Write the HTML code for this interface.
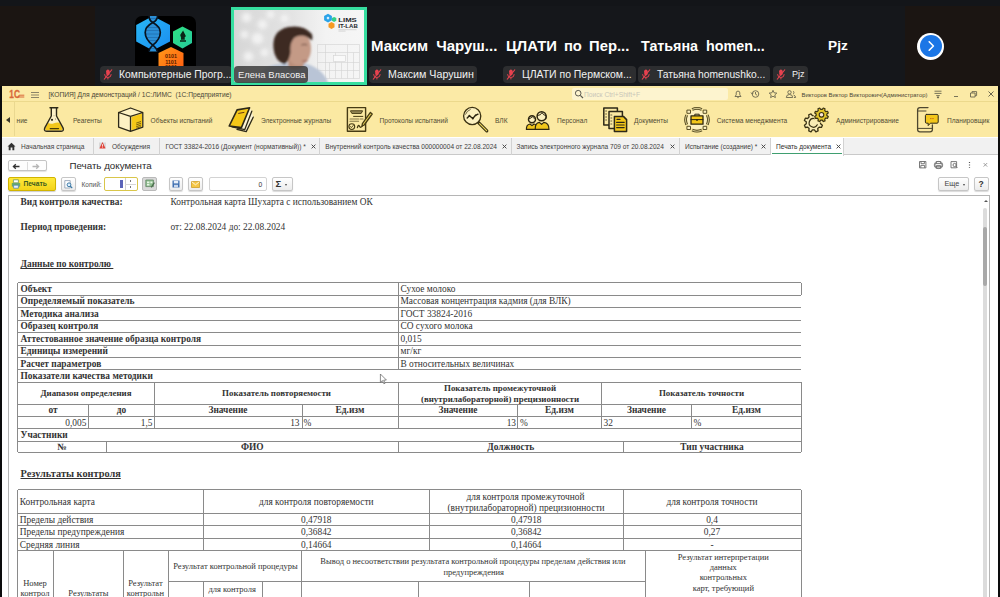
<!DOCTYPE html>
<html lang="ru">
<head>
<meta charset="utf-8">
<title>Печать документа</title>
<style>
html,body{margin:0;padding:0;}
body{width:1000px;height:597px;overflow:hidden;background:#0c0c0d;position:relative;font-family:"Liberation Sans",sans-serif;}
.a{position:absolute;white-space:nowrap;}
#top{left:0;top:0;width:1000px;height:86px;background:#15171b;}
.big{color:#fff;font-weight:bold;font-size:15px;line-height:18px;top:37px;word-spacing:4px;}
.pill{top:66px;height:17px;background:#2d2e30;border-radius:4px;color:#f2f2f2;font-size:10.7px;line-height:17px;padding-left:19px;box-sizing:border-box;overflow:hidden;}
.pill svg{position:absolute;left:2px;top:2px;}
#win{left:2px;top:86px;width:996px;height:511px;background:#fff;}
#title{left:0;top:0;width:996px;height:16px;background:#fbeaa6;border-bottom:1px solid #ecd98c;box-sizing:border-box;}
#sect{left:0;top:15px;width:996px;height:36px;background:#fbe9a2;}
#tabs{left:0;top:51.5px;width:996px;height:17.5px;background:#f1f1f1;border-bottom:1px solid #c9c9c9;box-sizing:border-box;}
.ui{font-size:6.7px;color:#4a4a4a;line-height:9px;}
.sec{font-size:6.6px;color:#514c33;line-height:9px;top:15px;}
.tab{top:0;height:17px;line-height:17px;font-size:6.6px;color:#3b3b3b;border-right:1px solid #cfcfcf;box-sizing:border-box;padding-left:6px;}
#doc{left:6px;top:109px;width:982px;height:402px;border:1px solid #b5b5b5;border-bottom:none;box-sizing:border-box;background:#fff;overflow:hidden;}
.s{text-decoration-skip-ink:none;font-family:"Liberation Serif",serif;font-size:9.4px;line-height:12px;color:#222;}
.b{font-weight:bold;}
</style>
</head>
<body>
<div id="top" class="a">
 <div class="a" style="left:0;top:0;width:1000px;height:6px;background:#131519"></div>
 <div class="a" style="left:905px;top:6px;width:95px;height:80px;background:#1b1512"></div>
 <div class="a" style="left:0;top:6px;width:95px;height:80px;background:#1b1512"></div>
 <!-- logo tile -->
 <div class="a" style="left:135px;top:16px;width:61px;height:62px;background:#000;border-radius:7px;overflow:hidden">
  <svg class="a" style="left:0;top:0" width="61" height="62" viewBox="0 0 61 62">
   <defs>
    <linearGradient id="gb" x1="0" y1="0" x2="1" y2="1"><stop offset="0" stop-color="#29b8f5"/><stop offset="1" stop-color="#1a8df0"/></linearGradient>
    <linearGradient id="gg" x1="0" y1="0" x2="1" y2="1"><stop offset="0" stop-color="#2fe07f"/><stop offset="1" stop-color="#25c9a0"/></linearGradient>
    <linearGradient id="go" x1="0" y1="0" x2="1" y2="1"><stop offset="0" stop-color="#ff9a1a"/><stop offset="1" stop-color="#ff5a10"/></linearGradient>
   </defs>
   <polygon points="17.8,0 35,8.9 35,25.5 17.8,34.5 1.2,25.5 1.2,8.9" fill="url(#gb)"/>
   <path d="M14,0 C14,4 16,5.5 17.8,6.6 C13.5,9 10.2,12 10.2,16.4 C10.2,22 14.5,26.5 17.8,29.2 C16,31 14,32 14,35.5 L22.3,35.5 C22,32 19.5,31 17.8,29.2 C21,26.5 25.3,22 25.3,16.4 C25.3,12 22,9 17.8,6.6 C20,5.5 22.5,4 22.5,0 Z" fill="#2b8fd6"/>
   <path d="M12,11.5 h11.6 M10.8,14.5 h14 M10.8,18 h14 M11.8,21.5 h12 M13.6,24.5 h8.4 M15,2.5 h6.5 M15.5,32.5 h5" stroke="#1f6fb0" stroke-width="0.8"/>
   <path d="M14,0 C14,4 16,5.5 17.8,6.6 C22,9 25.3,12 25.3,16.4 C25.3,22 21,26.5 17.8,29.2 C16,31 14,32 14,35.5 M22.5,0 C22.5,4 20,5.5 17.8,6.6 C13.5,9 10.2,12 10.2,16.4 C10.2,22 14.5,26.5 17.8,29.2 C19.5,31 22,32 22.3,35.5" stroke="#08131f" stroke-width="1.7" fill="none"/>
   <polygon points="47.5,10.5 57,15.5 57,27 47.5,32.5 38,27 38,15.5" fill="url(#gg)"/>
   <path d="M45,25 h6 M48,16 l2,4 l-3,2 l-1,-3 z M46,23 l3,0 l0,-2" stroke="#0b2418" stroke-width="1.5" fill="#0b2418"/>
   <polygon points="36,31 48.5,37 48.5,51 36,57 23.5,51 23.5,37" fill="url(#go)"/>
   <text x="36" y="42" font-family="Liberation Sans, sans-serif" font-weight="bold" font-size="5.4" text-anchor="middle" fill="#5a1d00">0101</text>
   <text x="36" y="47.6" font-family="Liberation Sans, sans-serif" font-weight="bold" font-size="5.4" text-anchor="middle" fill="#5a1d00">1101</text>
   <text x="36" y="53" font-family="Liberation Sans, sans-serif" font-weight="bold" font-size="5.4" text-anchor="middle" fill="#5a1d00">0101</text>
  </svg>
 </div>
 <div class="a pill" style="left:100px;width:132px;font-size:10.35px"><svg width="12" height="13" viewBox="0 0 12 13"><rect x="4.2" y="1.5" width="3.4" height="6" rx="1.7" fill="#e8424f"/><path d="M2.6,6.2 a3.3,3.3 0 0 0 6.6,0 M5.9,9.6 v1.8" stroke="#e8424f" stroke-width="1" fill="none"/><path d="M2,11.5 L10,1.5" stroke="#e8424f" stroke-width="1.2"/></svg>Компьютерные Прогр...</div>
 <!-- video tile -->
 <div class="a" id="vid" style="left:231px;top:7px;width:136px;height:78px;background:#e9e9e9;border:3px solid #36dea0;box-sizing:border-box;overflow:hidden">
  <svg class="a" style="left:-0.5px;top:-0.5px" width="131" height="73" viewBox="233.5 9.5 131 73">
   <defs>
    <filter id="bl" x="-20%" y="-20%" width="140%" height="140%"><feGaussianBlur stdDeviation="1.1"/></filter>
    <filter id="bl2" x="-20%" y="-20%" width="140%" height="140%"><feGaussianBlur stdDeviation="2.2"/></filter>
    <linearGradient id="bgv" x1="0" y1="0" x2="1" y2="0"><stop offset="0" stop-color="#d6d6d6"/><stop offset="0.45" stop-color="#e4e4e4"/><stop offset="0.7" stop-color="#f3f3f3"/><stop offset="1" stop-color="#f6f6f6"/></linearGradient>
   </defs>
   <rect x="233" y="9" width="132" height="74" fill="url(#bgv)"/>
   <g filter="url(#bl2)" fill="#f4f4f4" opacity="0.9">
    <circle cx="246" cy="17" r="5"/><circle cx="262" cy="24" r="5"/><circle cx="257" cy="38" r="6"/><circle cx="244" cy="34" r="4"/><circle cx="270" cy="14" r="4"/><circle cx="248" cy="56" r="5"/><circle cx="264" cy="52" r="4"/><circle cx="284" cy="18" r="4"/>
   </g>
   <g stroke="#cfcfcf" stroke-width="0.6" fill="none" opacity="0.9">
    <path d="M317,44 H359 V78 H317 Z M317,52 H359 M325,44 V78 M335,52 V78 M347,44 V78 M317,62 H359 M317,70 H359 M353,52 V78 M329,62 V78 M341,62 V78"/>
    <rect x="333" y="55" width="12" height="6" fill="#fafafa"/>
   </g>
   <g filter="url(#bl)">
    <path d="M256,83 Q258,67 276,64 L300,62 Q322,66 328,83 Z" fill="#b9c4d6"/>
    <path d="M287,50 L288,68 Q296,72 303,66 L303,56 Z" fill="#b98d78"/>
    <ellipse cx="298" cy="48" rx="12.5" ry="17" fill="#c49a86"/>
    <path d="M305,44 q5,6 3,10 q-2,2 -3,5 q-1,5 -6,5" fill="#c49a86"/>
    <path d="M273,48 Q271,30 288,26.5 Q303,24 311,33 Q313,37 311,40 Q303,32 294,37 Q289,42 290,52 Q289,60 284,64 Q274,60 273,48 Z" fill="#3d2a22"/>
    <path d="M302,60.5 q3,0.6 5,-0.4" stroke="#8a4a44" stroke-width="1.1" fill="none"/>
    <path d="M301,44.5 q3,-1.4 5.6,0" stroke="#5a3b30" stroke-width="1" fill="none"/>
   </g>
   <!-- LIMS IT-LAB logo -->
   <polygon points="327.5,13.2 331.4,15.4 331.4,19.8 327.5,22 323.6,19.8 323.6,15.4" fill="#2aa3e8"/>
   <circle cx="327.5" cy="17.6" r="1.3" fill="#cfeeff"/>
   <polygon points="333.6,16.4 335.8,17.6 335.8,20.2 333.6,21.4 331.4,20.2 331.4,17.6" fill="#33cf8a"/>
   <polygon points="331,21.6 334,23.3 334,26.7 331,28.4 328,26.7 328,23.3" fill="#f59a23"/>
   <text x="337.8" y="21.6" font-family="Liberation Sans, sans-serif" font-weight="bold" font-size="5.6" fill="#22252b" textLength="18.5" lengthAdjust="spacingAndGlyphs">LIMS</text>
   <text x="337.8" y="27.2" font-family="Liberation Sans, sans-serif" font-weight="bold" font-size="5.6" fill="#22252b" textLength="19.5" lengthAdjust="spacingAndGlyphs">IT-LAB</text>
   <path d="M338,29.2 H356 M338,30.6 H345" stroke="#b9b9b9" stroke-width="0.5"/>
  </svg>
 </div>
 <div class="a pill" style="left:234px;width:74px;padding-left:4px;background:rgba(60,60,60,.85);font-size:9.46px">Елена Власова</div>
 <div class="a big" style="left:371px;font-size:15px;word-spacing:4px">Максим Чаруш...</div>
 <div class="a pill" style="left:369px;width:108px;font-size:10.68px"><svg width="12" height="13" viewBox="0 0 12 13"><rect x="4.2" y="1.5" width="3.4" height="6" rx="1.7" fill="#e8424f"/><path d="M2.6,6.2 a3.3,3.3 0 0 0 6.6,0 M5.9,9.6 v1.8" stroke="#e8424f" stroke-width="1" fill="none"/><path d="M2,11.5 L10,1.5" stroke="#e8424f" stroke-width="1.2"/></svg>Максим Чарушин</div>
 <div class="a big" style="left:506px;font-size:14.8px;word-spacing:3px">ЦЛАТИ по Пер...</div>
 <div class="a pill" style="left:503px;width:133px;font-size:10.44px"><svg width="12" height="13" viewBox="0 0 12 13"><rect x="4.2" y="1.5" width="3.4" height="6" rx="1.7" fill="#e8424f"/><path d="M2.6,6.2 a3.3,3.3 0 0 0 6.6,0 M5.9,9.6 v1.8" stroke="#e8424f" stroke-width="1" fill="none"/><path d="M2,11.5 L10,1.5" stroke="#e8424f" stroke-width="1.2"/></svg>ЦЛАТИ по Пермском...</div>
 <div class="a big" style="left:641px;font-size:14.3px;word-spacing:4px">Татьяна homen...</div>
 <div class="a pill" style="left:638px;width:132px;font-size:10.25px"><svg width="12" height="13" viewBox="0 0 12 13"><rect x="4.2" y="1.5" width="3.4" height="6" rx="1.7" fill="#e8424f"/><path d="M2.6,6.2 a3.3,3.3 0 0 0 6.6,0 M5.9,9.6 v1.8" stroke="#e8424f" stroke-width="1" fill="none"/><path d="M2,11.5 L10,1.5" stroke="#e8424f" stroke-width="1.2"/></svg>Татьяна homenushko...</div>
 <div class="a big" style="left:828px;font-size:13.7px;word-spacing:0px">Pjz</div>
 <div class="a pill" style="left:773px;width:35px;font-size:9.1px"><svg width="12" height="13" viewBox="0 0 12 13"><rect x="4.2" y="1.5" width="3.4" height="6" rx="1.7" fill="#e8424f"/><path d="M2.6,6.2 a3.3,3.3 0 0 0 6.6,0 M5.9,9.6 v1.8" stroke="#e8424f" stroke-width="1" fill="none"/><path d="M2,11.5 L10,1.5" stroke="#e8424f" stroke-width="1.2"/></svg>Pjz</div>
 <div class="a" style="left:917px;top:32.5px;width:27px;height:27px;border-radius:50%;background:#fff"></div>
 <div class="a" style="left:919.5px;top:35px;width:22px;height:22px;border-radius:50%;background:#1b76e6"></div>
 <svg class="a" style="left:924px;top:39px" width="14" height="14" viewBox="0 0 14 14"><path d="M5.2,2.8 L9.4,7 L5.2,11.2" stroke="#fff" stroke-width="1.6" fill="none" stroke-linecap="round" stroke-linejoin="round"/></svg>
</div>
<div id="win" class="a">
 <div class="a" style="left:0;top:15px;width:996px;height:36px;background:#fbe9a2"></div>
 <div id="title" class="a">
  <svg class="a" style="left:6.5px;top:3px" width="17" height="10" viewBox="8.5 89 17 10">
   <text x="8.8" y="97.6" font-family="Liberation Sans, sans-serif" font-weight="bold" font-size="10.4" fill="#d9693a" stroke="#d9693a" stroke-width="0.3" textLength="10.6" lengthAdjust="spacingAndGlyphs">1С</text>
   <path d="M17.5,97 H23.8 M18.6,95.2 H23.8" stroke="#d9693a" stroke-width="1" fill="none"/>
  </svg>
  <div class="a" style="left:29px;top:5.5px;width:8px;height:1px;background:#8b8468;box-shadow:0 2.5px 0 #8b8468,0 5px 0 #8b8468"></div>
  <div class="a ui" style="left:46.5px;top:4px;color:#4a4636">[КОПИЯ] Для демонстраций / 1С:ЛИМС&nbsp; (1С:Предприятие)</div>
  <div class="a" style="left:570px;top:2px;width:156px;height:12px;background:#fdf4cf;border-radius:2px"></div>
  <svg class="a" style="left:572px;top:3px" width="10" height="10" viewBox="0 0 10 10"><circle cx="4.2" cy="4.2" r="2.8" stroke="#5c5a50" stroke-width="1" fill="none"/><path d="M6.3,6.3 L9,9" stroke="#5c5a50" stroke-width="1.2"/></svg>
  <div class="a ui" style="left:582px;top:4px;color:#c9c6b8">Поиск Ctrl+Shift+F</div>
  <svg class="a" style="left:730px;top:2px" width="70" height="12" viewBox="0 0 70 12" fill="none" stroke="#6a664f" stroke-width="0.9">
   <path d="M3,8.5 h6 l-1.2,-1.6 v-2 a1.8,1.8 0 0 0 -3.6,0 v2 z M5.3,9.6 h1.4"/>
   <circle cx="23.5" cy="6" r="3.3"/><path d="M23.5,4 v2.2 l1.6,1 M19,4.5 l1.2,1.6 1.4,-1.2"/>
   <path d="M41,2.3 l1.1,2.5 2.7,0.3 -2,1.8 0.6,2.7 -2.4,-1.4 -2.4,1.4 0.6,-2.7 -2,-1.8 2.7,-0.3 z"/>
   <circle cx="57.5" cy="4.3" r="1.7"/><path d="M54.3,9.5 a3.2,3 0 0 1 6.4,0 z M61,3.2 a1.5,1.5 0 0 1 0,2.8 M62,9.5 h1.6 a2.6,2.6 0 0 0 -2,-2.4"/>
  </svg>
  <div class="a" style="left:799.5px;top:4.5px;font-size:5.9px;line-height:8px;color:#4a4636">Викторов Виктор Викторович(Администратор)</div>
  <svg class="a" style="left:930px;top:2px" width="66" height="12" viewBox="0 0 66 12" fill="none" stroke="#6a664f" stroke-width="0.9">
   <path d="M2.5,3.2 h7 M2.5,5.4 h7 M4.2,7.6 h3.6"/><path d="M5,9 h2 l-1,1.2 z" fill="#6a664f"/>
   <path d="M22,8.5 h4"/>
   <path d="M38.5,5 h4.6 v4 h-4.6 z M40,5 v-1.4 h4.6 v4 h-1.5"/>
   <path d="M56.5,3.5 l5,5 M61.5,3.5 l-5,5" stroke-width="1"/>
  </svg>
 </div>
 <div id="sect" class="a" style="left:0;top:0;height:51px;background:none">
<div class="a" style="left:4px;top:31px;width:0;height:0;border:3px solid transparent;border-right:4px solid #3a3627;border-left:none"></div>
<div class="a" style="left:12px;top:16px;width:1px;height:34px;background:#ead890"></div>
<div class="a sec" style="left:14.5px;top:29.5px">ние</div>
<svg class="a" style="left:40px;top:19px" width="24" height="28" viewBox="42 105 24 28" fill="none" stroke="#2d2918" stroke-width="1.3" stroke-linejoin="round" stroke-linecap="round">
 <path d="M51.3,108 V116 L44.9,127.6 Q43.4,131 46.6,131.2 H61.2 Q64.4,131 62.9,127.6 L56.5,116 V108 Z" fill="#fdf2c6" stroke="none"/>
 <path d="M48.2,123 Q51,124.4 54,123.2 T59.6,122.8 L62.2,127.6 Q63.4,130.4 60.8,130.6 H47 Q44.4,130.4 45.6,127.6 Z" fill="#f3c71b" stroke="none"/>
 <path d="M50,107.8 H57.8 M51.3,108 V116 L44.9,127.6 Q43.4,131 46.6,131.2 H61.2 Q64.4,131 62.9,127.6 L56.5,116 V108" stroke-width="1.4"/>
 <circle cx="52" cy="119.8" r="1.1" fill="#2d2918" stroke="none"/><circle cx="55.6" cy="119" r="0.45" fill="#2d2918" stroke="none"/><circle cx="54" cy="115.8" r="0.4" fill="#2d2918" stroke="none"/>
 <path d="M50.2,128.6 H58.6" stroke="#4a3d08" stroke-width="1.1"/></svg>
<div class="a sec" style="left:71px;top:29.5px">Реагенты</div>
<svg class="a" style="left:115px;top:20px" width="28" height="27" viewBox="117 106 28 27" fill="none" stroke="#2d2918" stroke-width="1.3" stroke-linejoin="round" stroke-linecap="round">
 <path d="M130.5,108 L142.8,112.5 L130.5,116.4 L118.6,112.5 Z M118.6,112.5 L130.5,116.4 V131.3 L118.6,127.1 Z" fill="#fdf2c4" stroke="none"/>
 <path d="M131.6,117 L142,113.6 V126.6 L131.6,130.2 Z" fill="#f5c818" stroke="none"/>
 <path d="M130.5,108 L142.8,112.5 V127.1 L130.5,131.3 L118.6,127.1 V112.5 Z M118.6,112.5 L130.5,116.4 L142.8,112.5 M130.5,116.4 V131.3"/>
 <path d="M136.6,123 l4,-1.4 M136.6,124.8 l4,-1.4 M136.6,126.6 l4,-1.4 M136.6,128.2 l4,-1.4" stroke="#5a4a10" stroke-width="0.8"/></svg>
<div class="a sec" style="left:148.5px;top:29.5px">Объекты испытаний</div>
<svg class="a" style="left:225px;top:19px" width="30" height="29" viewBox="227 105 30 29" fill="none" stroke="#2d2918" stroke-width="1.3" stroke-linejoin="round" stroke-linecap="round">
 <path d="M249.6,108 L251.8,111 L253.2,117 L246.2,131.6 L229.4,126.6 Z" fill="#fdf5d5" stroke="none"/>
 <path d="M251.8,111.2 L244.8,129.6 L232,126.9 M253.2,117.2 L246.2,131.6 L237,129.4" stroke-width="1.3"/>
 <path d="M237.1,109.9 L249.6,107.8 L241.4,127.6 L229.2,126 Z" fill="#f5c818" stroke-width="1.6"/>
 <path d="M238.6,113.4 L244,112.4" stroke="#6a3a10" stroke-width="1"/></svg>
<div class="a sec" style="left:259px;top:29.5px">Электронные журналы</div>
<svg class="a" style="left:343px;top:19px" width="30" height="29" viewBox="345 105 30 29" fill="none" stroke="#2d2918" stroke-width="1.3" stroke-linejoin="round" stroke-linecap="round">
 <path d="M347.4,107.6 H365.6 V131.2 H347.4 Z" stroke="#463b14" stroke-width="1.4"/>
 <path d="M350.8,110.8 H362.6 L361.2,113.4 H352.2 Z" fill="#9a8d5a" stroke="#463b14" stroke-width="1"/>
 <path d="M353.6,116.4 H362.8" stroke="#463b14" stroke-width="1"/>
 <path d="M350,119 H358.6 M360,119 H363 M350,121.2 H358.6" stroke="#85784a" stroke-width="1.1"/>
 <circle cx="351.8" cy="126.6" r="2.9" stroke="#463b14" stroke-width="1.1"/><path d="M350.4,126.5 l1,1.1 1.8,-2.1" stroke="#463b14" stroke-width="0.9"/>
 <path d="M357.4,127.6 q1,-3.4 2,-1.4 t2.6,0.2 l1.4,-1.4" stroke="#463b14" stroke-width="1.3"/>
 <path d="M370.4,112.4 L372.2,114 L364.2,125 L362,126 L362.4,123.6 Z" fill="#e9d25a" stroke="#463b14" stroke-width="1.3"/></svg>
<div class="a sec" style="left:377.5px;top:29.5px">Протоколы испытаний</div>
<svg class="a" style="left:459px;top:19px" width="30" height="29" viewBox="461 105 30 29" fill="none" stroke="#2d2918" stroke-width="1.3" stroke-linejoin="round" stroke-linecap="round">
 <path d="M478.6,122.6 L486.8,130.8" stroke="#3a3112" stroke-width="3.2"/>
 <path d="M479.6,123.6 L486.6,130.6" stroke="#ecd75a" stroke-width="1.2"/>
 <circle cx="472.2" cy="116" r="8.6" fill="#fcf1c0" stroke="#3a3112" stroke-width="1.3"/>
 <path d="M465.6,114.2 a7,7 0 0 1 4.6,-4.6" stroke="#3a3112" stroke-width="0.7"/>
 <path d="M467.2,117.9 L469.4,115.7 L472.8,118.5 L475.4,115.4 L478,114.2" stroke="#2a2410" stroke-width="1.4"/>
 <circle cx="469.4" cy="115.7" r="0.9" fill="#2a2410" stroke="none"/><circle cx="472.8" cy="118.5" r="0.9" fill="#2a2410" stroke="none"/><circle cx="475.6" cy="115.3" r="0.9" fill="#2a2410" stroke="none"/></svg>
<div class="a sec" style="left:493px;top:29.5px">ВЛК</div>
<svg class="a" style="left:521px;top:21px" width="28" height="26" viewBox="523 107 28 26" fill="none" stroke="#2d2918" stroke-width="1.3" stroke-linejoin="round" stroke-linecap="round">
 <path d="M526.4,129.4 Q526.2,124.6 530,124 L532,125.6 L534,124 Q535.4,124.2 536,125 L536,129.4 Z" fill="#f0c61c" stroke="#2d2610" stroke-width="1.2"/>
 <circle cx="532" cy="119.2" r="3.5" fill="#fcf1c0" stroke="#2d2610" stroke-width="1.5"/>
 <path d="M528.8,118.6 q2.6,0 3.4,-2 q1.2,1.6 3,1.8" stroke="#2d2610" stroke-width="1"/>
 <path d="M535.2,129.4 Q535,123 539.4,122.4 L541.6,124.4 L543.8,122.4 Q549,123 549,129.4 Z" fill="#f0c61c" stroke="#2d2610" stroke-width="1.2"/>
 <circle cx="541.6" cy="116.2" r="4.5" fill="#fcf1c0" stroke="#2d2610" stroke-width="1.5"/>
 <path d="M537.4,115.6 q3.6,-0.2 4.6,-3 q1.4,2.8 3.8,3" stroke="#2d2610" stroke-width="1"/>
 <path d="M546.4,116 q0.6,2 -0.6,3.4" stroke="#2d2610" stroke-width="0.9"/></svg>
<div class="a sec" style="left:555px;top:29.5px">Персонал</div>
<svg class="a" style="left:600px;top:20px" width="27" height="28" viewBox="602 106 27 28" fill="none" stroke="#2d2918" stroke-width="1.3" stroke-linejoin="round" stroke-linecap="round">
 <path d="M603.8,108 H617.4 V125 H603.8 Z" stroke-width="1.5"/>
 <path d="M605.6,111 h1 M605.6,114 h1 M605.6,117 h1 M605.6,120 h1" stroke-width="0.7"/>
 <path d="M609,111.6 H622.4 V128.6 H609 Z" fill="#fbe9a2" stroke-width="1.5"/>
 <path d="M610.8,115 h1 M610.8,118 h1 M610.8,121 h1 M610.8,124 h1" stroke-width="0.7"/>
 <path d="M614.4,116.4 H623.4 L626.6,119.6 V131.6 H614.4 Z" fill="#f3c71b" stroke-width="1.5"/>
 <path d="M617,119.4 h3 M616.6,122.4 h7.6 M616.6,125 h7.6 M616.6,127.6 h7.6" stroke-width="1.1"/></svg>
<div class="a sec" style="left:632px;top:29.5px">Документы</div>
<svg class="a" style="left:681px;top:19px" width="28" height="29" viewBox="683 105 28 29" fill="none" stroke="#2d2918" stroke-width="1.3" stroke-linejoin="round" stroke-linecap="round">
 <circle cx="697" cy="119.8" r="10" fill="#fcf0bf" stroke="none"/>
 <path d="M692.2,109.5 A11.4,11.4 0 0 1 701.8,109.5 M707.3,115.0 A11.4,11.4 0 0 1 707.3,124.6 M701.8,130.1 A11.4,11.4 0 0 1 692.2,130.1 M686.7,124.6 A11.4,11.4 0 0 1 686.7,115.0" stroke="#4a4018" stroke-width="2.8" stroke-linecap="butt"/>
 <path d="M692.2,109.5 A11.4,11.4 0 0 1 701.8,109.5 M707.3,115.0 A11.4,11.4 0 0 1 707.3,124.6 M701.8,130.1 A11.4,11.4 0 0 1 692.2,130.1 M686.7,124.6 A11.4,11.4 0 0 1 686.7,115.0" stroke="#cfc28a" stroke-width="1.1" stroke-linecap="butt"/>
 <rect x="703.5" y="110.1" width="3.2" height="3.2" fill="#fbefc0" stroke="#4a4018" stroke-width="0.9"/><rect x="703.5" y="126.3" width="3.2" height="3.2" fill="#fbefc0" stroke="#4a4018" stroke-width="0.9"/><rect x="687.3" y="126.3" width="3.2" height="3.2" fill="#fbefc0" stroke="#4a4018" stroke-width="0.9"/><rect x="687.3" y="110.1" width="3.2" height="3.2" fill="#fbefc0" stroke="#4a4018" stroke-width="0.9"/>
 <path d="M691,115.8 H703 V124.2 H691 Z" fill="#f3c71b" stroke="#2d2610" stroke-width="1.3"/>
 <path d="M694.8,115.6 V114.2 H699.2 V115.6 M691,119.6 H703" stroke="#2d2610" stroke-width="1"/>
 <circle cx="697" cy="120" r="0.9" fill="#2d2610" stroke="none"/></svg>
<div class="a sec" style="left:714.8px;top:29.5px">Система менеджмента</div>
<svg class="a" style="left:800px;top:19px" width="30" height="29" viewBox="802 105 30 29" fill="none" stroke="#2d2918" stroke-width="1.3" stroke-linejoin="round" stroke-linecap="round"><path d="M820.53,123.80 L822.40,125.16 L821.45,127.45 L819.17,127.11 L817.74,128.55 L818.09,130.83 L815.81,131.78 L814.43,129.93 L812.40,129.93 L811.04,131.80 L808.75,130.85 L809.09,128.57 L807.65,127.14 L805.37,127.49 L804.42,125.21 L806.27,123.83 L806.27,121.80 L804.40,120.44 L805.35,118.15 L807.63,118.49 L809.06,117.05 L808.71,114.77 L810.99,113.82 L812.37,115.67 L814.40,115.67 L815.76,113.80 L818.05,114.75 L817.71,117.03 L819.15,118.46 L821.43,118.11 L822.38,120.39 L820.53,121.77 Z" fill="#f8ecb4" stroke="#3a3214" stroke-width="1.3"/><path d="M817.3,124.8 A4.3,4.3 0 1 1 814.6,118.7" stroke="#3a3214" stroke-width="1.2" fill="none"/><circle cx="821.5" cy="114.8" r="8" fill="#fbe9a2" stroke="none"/><path d="M826.85,115.55 L828.27,116.58 L827.56,118.30 L825.83,118.03 L824.75,119.11 L825.03,120.84 L823.31,121.56 L822.28,120.14 L820.75,120.15 L819.72,121.57 L818.00,120.86 L818.27,119.13 L817.19,118.05 L815.46,118.33 L814.74,116.61 L816.16,115.58 L816.15,114.05 L814.73,113.02 L815.44,111.30 L817.17,111.57 L818.25,110.49 L817.97,108.76 L819.69,108.04 L820.72,109.46 L822.25,109.45 L823.28,108.03 L825.00,108.74 L824.73,110.47 L825.81,111.55 L827.54,111.27 L828.26,112.99 L826.84,114.02 Z" fill="#e3c52a" stroke="#3a3214" stroke-width="1.2"/><circle cx="821.5" cy="114.8" r="2.3" fill="#fbe6d6" stroke="#3a3214" stroke-width="1.1"/></svg>
<div class="a sec" style="left:834px;top:29.5px">Администрирование</div>
<svg class="a" style="left:913px;top:19px" width="26" height="29" viewBox="915 105 26 29" fill="none" stroke="#2d2918" stroke-width="1.3" stroke-linejoin="round" stroke-linecap="round">
 <path d="M928,107.6 H920 Q917.6,107.6 917.6,110 V129.4 Q917.6,131.8 920,131.8 H930 Q932.4,131.8 932.4,129.4 V125" stroke="#4d4730"/>
 <path d="M917.6,128.4 H932.4 M917.6,111 H926" stroke="#4d4730" stroke-width="1"/>
 <path d="M926.6,114.4 H937 Q938.2,114.4 938.2,115.6 V122 Q938.2,123.2 937,123.2 H930.4 L928.2,125.6 V123.2 H926.6 Q925.4,123.2 925.4,122 V115.6 Q925.4,114.4 926.6,114.4 Z" fill="#f3c71b" stroke-width="1"/>
 <path d="M930.4,118.6 h0.8 M932.6,118.6 h0.8" stroke="#c76a16" stroke-width="0.9"/></svg>
<div class="a sec" style="left:945px;top:29.5px">Планировщик</div>
 </div>
 <div id="tabs" class="a">
<div class="a" style="left:91px;top:0;width:1px;height:17px;background:#d2d2d2"></div>
<div class="a" style="left:156.5px;top:0;width:1px;height:17px;background:#d2d2d2"></div>
<div class="a" style="left:316.5px;top:0;width:1px;height:17px;background:#d2d2d2"></div>
<div class="a" style="left:508.5px;top:0;width:1px;height:17px;background:#d2d2d2"></div>
<div class="a" style="left:676.5px;top:0;width:1px;height:17px;background:#d2d2d2"></div>
<div class="a" style="left:768px;top:0;width:1px;height:17px;background:#d2d2d2"></div>
<svg class="a" style="left:5px;top:4px" width="9" height="9" viewBox="0 0 9 9"><path d="M0.5,4.6 L4.5,0.8 L8.5,4.6 H7.3 V8.2 H5.4 V5.6 H3.6 V8.2 H1.7 V4.6 Z" fill="#333"/></svg>
<div class="a" style="left:19px;top:4px;font-size:6.55px;line-height:9px;color:#3d3d3d">Начальная страница</div>
<svg class="a" style="left:96px;top:3.5px" width="9" height="9" viewBox="0 0 9 9"><path d="M1,1.5 h7 v5.5 h-7 z" fill="#d9d9d9"/><path d="M4.5,1 L7.6,7.6 H1.4 Z" fill="#e0443a"/><path d="M4.5,3.2 v2.4 M4.5,6.4 v0.5" stroke="#fff" stroke-width="0.8"/></svg>
<div class="a" style="left:110px;top:4px;font-size:6.55px;line-height:9px;color:#3d3d3d">Обсуждения</div>
<div class="a" style="left:163.5px;top:4px;font-size:6.55px;line-height:9px;color:#3d3d3d">ГОСТ 33824-2016 (Документ (нормативный)) *</div>
<svg class="a" style="left:308.5px;top:6px" width="5" height="5" viewBox="0 0 5 5"><path d="M0.6,0.6 L4.4,4.4 M4.4,0.6 L0.6,4.4" stroke="#444" stroke-width="0.95"/></svg>
<div class="a" style="left:323.3px;top:4px;font-size:6.55px;line-height:9px;color:#3d3d3d">Внутренний контроль качества 000000004 от 22.08.2024</div>
<svg class="a" style="left:500.0px;top:6px" width="5" height="5" viewBox="0 0 5 5"><path d="M0.6,0.6 L4.4,4.4 M4.4,0.6 L0.6,4.4" stroke="#444" stroke-width="0.95"/></svg>
<div class="a" style="left:514.5px;top:4px;font-size:6.55px;line-height:9px;color:#3d3d3d">Запись электронного журнала 709 от 20.08.2024</div>
<svg class="a" style="left:668.0px;top:6px" width="5" height="5" viewBox="0 0 5 5"><path d="M0.6,0.6 L4.4,4.4 M4.4,0.6 L0.6,4.4" stroke="#444" stroke-width="0.95"/></svg>
<div class="a" style="left:683px;top:4px;font-size:6.55px;line-height:9px;color:#3d3d3d">Испытание (создание) *</div>
<svg class="a" style="left:759.0px;top:6px" width="5" height="5" viewBox="0 0 5 5"><path d="M0.6,0.6 L4.4,4.4 M4.4,0.6 L0.6,4.4" stroke="#444" stroke-width="0.95"/></svg>
<div class="a" style="left:769px;top:0;width:73px;height:18px;background:#fff;border-right:1px solid #d2d2d2;box-sizing:border-box"></div>
<div class="a" style="left:770px;top:15.2px;width:70px;height:1.4px;background:#3f9f70"></div>
<div class="a" style="left:774px;top:4px;font-size:6.55px;line-height:9px;color:#2c2c2c">Печать документа</div>
<svg class="a" style="left:834.0px;top:6px" width="5" height="5" viewBox="0 0 5 5"><path d="M0.6,0.6 L4.4,4.4 M4.4,0.6 L0.6,4.4" stroke="#444" stroke-width="0.95"/></svg>
 </div>
<div class="a" style="left:5.5px;top:73.5px;width:39px;height:11.5px;border:1px solid #c4c4c4;border-radius:2px;box-sizing:border-box;background:#fdfdfd;box-shadow:0 1px 1px rgba(0,0,0,.12)"></div>
<div class="a" style="left:24.5px;top:75.5px;width:1px;height:8.5px;background:#dcdcdc"></div>
<svg class="a" style="left:10px;top:76.5px" width="32" height="7" viewBox="0 0 32 7"><path d="M7.5,3.5 H1.6 M3.8,1.2 L1.4,3.5 L3.8,5.8" stroke="#333" stroke-width="1.3" fill="none"/><path d="M20.5,3.5 H26.4 M24.2,1.2 L26.6,3.5 L24.2,5.8" stroke="#b5b5b5" stroke-width="1.3" fill="none"/></svg>
<div class="a" style="left:67.5px;top:73px;font-size:9.75px;line-height:13px;color:#2a2a2a">Печать документа</div>
<svg class="a" style="left:913px;top:73px" width="80" height="12" viewBox="915 159 80 12" fill="none" stroke="#6b6b6b" stroke-width="0.9">
 <path d="M919.5,161.5 h6.4 v6.4 h-6.4 z M921,161.5 v2.2 h3.4 v-2.2 M920.8,167.8 v-2.4 h3.8 v2.4"/>
 <path d="M935,163.6 h7 v3.2 h-7 z M936.4,163.4 v-1.8 h4.2 v1.8 M936.4,165.6 h4.2 v2.6 h-4.2 z"/><ellipse cx="938.5" cy="165" rx="4.2" ry="3.6" stroke-width="0.7"/>
 <path d="M951,161.6 h5.6 v6.2 h-5.6 z"/><circle cx="954.6" cy="165" r="1.6"/><path d="M955.8,166.2 l1.6,1.6"/>
 <path d="M969.5,162 v0.9 M969.5,164.6 v0.9 M969.5,167.2 v0.9" stroke="#555" stroke-width="1.2"/>
 <path d="M983.6,163 l3.6,3.6 M987.2,163 l-3.6,3.6" stroke="#888" stroke-width="0.8"/>
</svg>
<div class="a" style="left:5.5px;top:91px;width:48.5px;height:13.5px;border:1px solid #d1b400;border-radius:2px;box-sizing:border-box;background:linear-gradient(#ffe93a,#f3d31a);box-shadow:0 1px 1px rgba(0,0,0,.2)"></div>
<svg class="a" style="left:8.5px;top:93px" width="10" height="10" viewBox="0 0 10 10"><path d="M2.4,0.8 h5 v3 h-5 z" fill="#fff" stroke="#5b8a5e" stroke-width="0.7"/><path d="M0.8,4 h8.4 v3.6 h-8.4 z" fill="#6aa86c"/><path d="M2.6,6.2 h4.8 v3 h-4.8 z" fill="#e9f3ff" stroke="#4a7fb5" stroke-width="0.7"/></svg>
<div class="a" style="left:21.5px;top:93.30000000000001px;font-size:6.7px;line-height:9px;font-weight:bold;color:#3b5b1e">Печать</div>
<div class="a" style="left:59px;top:91px;width:14.5px;height:13.5px;border:1px solid #c6c6c6;border-radius:2px;box-sizing:border-box;background:linear-gradient(#ffffff,#ececec);box-shadow:0 1px 1px rgba(0,0,0,.15)"></div>
<svg class="a" style="left:62px;top:93.5px" width="9" height="9" viewBox="0 0 9 9"><path d="M0.8,0.6 h5.4 v7.4 h-5.4 z" fill="#fff" stroke="#7d8fa8" stroke-width="0.7"/><circle cx="5" cy="4.8" r="1.9" fill="#dff0ff" stroke="#2d6f9e" stroke-width="0.9"/><path d="M6.4,6.2 l1.8,1.9" stroke="#2d6f9e" stroke-width="1.1"/></svg>
<div class="a" style="left:79.5px;top:93.5px;font-size:6.55px;line-height:9px;color:#555">Копий:</div>
<div class="a" style="left:101.5px;top:90.5px;width:34px;height:14.5px;border:1px solid #d9c64a;border-radius:2px;box-sizing:border-box;background:#fff"></div>
<div class="a" style="left:118px;top:93.5px;width:2.6px;height:8.6px;background:#5a63b8"></div>
<div class="a" style="left:122.5px;top:92px;width:1px;height:11.5px;background:#cfcfcf"></div>
<div class="a" style="left:123px;top:97.5px;width:11px;height:1px;background:#d6d6d6"></div>
<div class="a" style="left:127.80000000000001px;top:94.4px;width:1.4px;height:1.4px;background:#777;box-shadow:0 6px 0 #777"></div>
<div class="a" style="left:140px;top:91px;width:14.5px;height:13.5px;border:1px solid #b9b9b9;border-radius:2px;box-sizing:border-box;background:#d9d9d9"></div>
<svg class="a" style="left:142.5px;top:93.30000000000001px" width="10" height="9" viewBox="0 0 10 9"><path d="M0.8,1 h7.6 v6.6 h-7.6 z" fill="#8fbf8f" stroke="#5a7d5c" stroke-width="0.7"/><path d="M2,2.4 h2.4 v1.8 h-2.4 z M5.4,2.4 h2 v1.8 h-2 z M2,5 h2.4 v1.6 h-2.4 z" fill="#e8f4e6"/><path d="M6.2,8.4 L9.4,3.6" stroke="#486b4a" stroke-width="1.1"/></svg>
<div class="a" style="left:167px;top:91px;width:14px;height:13.5px;border:1px solid #c6c6c6;border-radius:2px;box-sizing:border-box;background:linear-gradient(#ffffff,#ececec);box-shadow:0 1px 1px rgba(0,0,0,.15)"></div>
<svg class="a" style="left:170px;top:93.69999999999999px" width="8" height="8" viewBox="0 0 8 8"><path d="M0.5,0.5 h7 v7 h-7 z" fill="#3f6fb0"/><path d="M1.8,0.8 h4.4 v2.6 h-4.4 z" fill="#e9f0fa"/><path d="M2,4.8 h4 v2.6 h-4 z" fill="#c9d8ee"/></svg>
<div class="a" style="left:186px;top:91px;width:15px;height:13.5px;border:1px solid #c6c6c6;border-radius:2px;box-sizing:border-box;background:linear-gradient(#ffffff,#ececec);box-shadow:0 1px 1px rgba(0,0,0,.15)"></div>
<svg class="a" style="left:189.3px;top:94.5px" width="9" height="7" viewBox="0 0 9 7"><path d="M0.5,0.5 h8 v6 h-8 z" fill="#f6c744" stroke="#c99719" stroke-width="0.7"/><path d="M0.8,0.8 L4.5,3.8 L8.2,0.8" stroke="#fff" stroke-width="0.8" fill="none"/></svg>
<div class="a" style="left:207px;top:91px;width:58px;height:13.5px;border:1px solid #d3d3d3;border-radius:2px;box-sizing:border-box;background:#fff"></div>
<div class="a" style="left:256.5px;top:93.5px;font-size:6.7px;line-height:9px;color:#333">0</div>
<div class="a" style="left:270px;top:91px;width:20.5px;height:13.5px;border:1px solid #c6c6c6;border-radius:2px;box-sizing:border-box;background:linear-gradient(#ffffff,#ececec);box-shadow:0 1px 1px rgba(0,0,0,.15)"></div>
<div class="a" style="left:273.5px;top:92px;font-size:9.5px;line-height:11px;font-weight:bold;color:#333">Σ</div>
<div class="a" style="left:283.2px;top:97.6px;width:0;height:0;border:1.6px solid transparent;border-top:2px solid #444;border-bottom:none"></div>
<div class="a" style="left:935.5px;top:91px;width:31px;height:13.5px;border:1px solid #c6c6c6;border-radius:2px;box-sizing:border-box;background:linear-gradient(#ffffff,#ececec);box-shadow:0 1px 1px rgba(0,0,0,.15)"></div>
<div class="a" style="left:942.5px;top:93.30000000000001px;font-size:7.3px;line-height:9px;color:#444">Еще</div>
<div class="a" style="left:961px;top:97.6px;width:0;height:0;border:1.6px solid transparent;border-top:2px solid #444;border-bottom:none"></div>
<div class="a" style="left:971.5px;top:91px;width:15.5px;height:13.5px;border:1px solid #c6c6c6;border-radius:2px;box-sizing:border-box;background:linear-gradient(#ffffff,#ececec);box-shadow:0 1px 1px rgba(0,0,0,.15)"></div>
<div class="a" style="left:976.6px;top:92.5px;font-size:8.5px;line-height:11px;font-weight:bold;color:#333">?</div>

 <div id="doc" class="a">
<div class="a s b" style="top:0.4px;font-size:9.4px;color:#333;left:11.5px;">Вид контроля качества:</div>
<div class="a s" style="top:0.4px;font-size:9.4px;color:#333;left:161.5px;">Контрольная карта Шухарта с использованием ОК</div>
<div class="a s b" style="top:25.0px;font-size:9.4px;color:#333;left:11.5px;">Период проведения:</div>
<div class="a s" style="top:25.0px;font-size:9.4px;color:#333;left:161.5px;">от: 22.08.2024 до: 22.08.2024</div>
<div class="a s b" style="top:61.9px;font-size:9.4px;color:#333;left:11.5px;text-decoration:underline;">Данные по контролю&nbsp;</div>
<div class="a" style="left:8.7px;top:86.1px;width:783.5px;height:1px;background:#8a8a8a"></div>
<div class="a" style="left:8.7px;top:98.6px;width:783.5px;height:1px;background:#8a8a8a"></div>
<div class="a" style="left:8.7px;top:111.1px;width:783.5px;height:1px;background:#8a8a8a"></div>
<div class="a" style="left:8.7px;top:123.5px;width:783.5px;height:1px;background:#8a8a8a"></div>
<div class="a" style="left:8.7px;top:136.0px;width:783.5px;height:1px;background:#8a8a8a"></div>
<div class="a" style="left:8.7px;top:148.5px;width:783.5px;height:1px;background:#8a8a8a"></div>
<div class="a" style="left:8.7px;top:160.9px;width:783.5px;height:1px;background:#8a8a8a"></div>
<div class="a" style="left:8.7px;top:173.0px;width:783.5px;height:1px;background:#8a8a8a"></div>
<div class="a" style="left:8.7px;top:185.6px;width:783.5px;height:1px;background:#8a8a8a"></div>
<div class="a s b" style="top:86.8px;font-size:9.4px;color:#333;left:11.5px;">Объект</div>
<div class="a s" style="top:86.8px;font-size:9.4px;color:#333;left:391.5px;">Сухое молоко</div>
<div class="a s b" style="top:99.3px;font-size:9.4px;color:#333;left:11.5px;">Определяемый показатель</div>
<div class="a s" style="top:99.3px;font-size:9.4px;color:#333;left:391.5px;">Массовая концентрация кадмия (для ВЛК)</div>
<div class="a s b" style="top:111.8px;font-size:9.4px;color:#333;left:11.5px;">Методика анализа</div>
<div class="a s" style="top:111.8px;font-size:9.4px;color:#333;left:391.5px;">ГОСТ 33824-2016</div>
<div class="a s b" style="top:124.2px;font-size:9.4px;color:#333;left:11.5px;">Образец контроля</div>
<div class="a s" style="top:124.2px;font-size:9.4px;color:#333;left:391.5px;">СО сухого молока</div>
<div class="a s b" style="top:136.7px;font-size:9.4px;color:#333;left:11.5px;">Аттестованное значение образца контроля</div>
<div class="a s" style="top:136.7px;font-size:9.4px;color:#333;left:391.5px;">0,015</div>
<div class="a s b" style="top:149.2px;font-size:9.4px;color:#333;left:11.5px;">Единицы измерений</div>
<div class="a s" style="top:149.2px;font-size:9.4px;color:#333;left:391.5px;">мг/кг</div>
<div class="a s b" style="top:161.6px;font-size:9.4px;color:#333;left:11.5px;">Расчет параметров</div>
<div class="a s" style="top:161.6px;font-size:9.4px;color:#333;left:391.5px;">В относительных величинах</div>
<div class="a s b" style="top:173.7px;font-size:9.4px;color:#333;left:11.5px;">Показатели качества методики</div>
<div class="a" style="left:8.2px;top:86.6px;width:1px;height:169.8px;background:#8a8a8a"></div>
<div class="a" style="left:791.7px;top:86.6px;width:1px;height:12.5px;background:#8a8a8a"></div>
<div class="a" style="left:791.7px;top:186.1px;width:1px;height:70.3px;background:#8a8a8a"></div>
<div class="a" style="left:389.0px;top:86.6px;width:1px;height:86.9px;background:#8a8a8a"></div>
<div class="a" style="left:8.7px;top:207.7px;width:783.5px;height:1px;background:#8a8a8a"></div>
<div class="a" style="left:8.7px;top:219.8px;width:783.5px;height:1px;background:#8a8a8a"></div>
<div class="a" style="left:8.7px;top:232.0px;width:783.5px;height:1px;background:#8a8a8a"></div>
<div class="a" style="left:8.7px;top:244.5px;width:783.5px;height:1px;background:#8a8a8a"></div>
<div class="a" style="left:8.7px;top:255.9px;width:783.5px;height:1px;background:#8a8a8a"></div>
<div class="a" style="left:144.9px;top:186.1px;width:1px;height:46.4px;background:#8a8a8a"></div>
<div class="a" style="left:389.0px;top:186.1px;width:1px;height:46.4px;background:#8a8a8a"></div>
<div class="a" style="left:592.0px;top:186.1px;width:1px;height:46.4px;background:#8a8a8a"></div>
<div class="a" style="left:78.9px;top:208.2px;width:1px;height:24.3px;background:#8a8a8a"></div>
<div class="a" style="left:292.5px;top:208.2px;width:1px;height:24.3px;background:#8a8a8a"></div>
<div class="a" style="left:508.0px;top:208.2px;width:1px;height:24.3px;background:#8a8a8a"></div>
<div class="a" style="left:682.0px;top:208.2px;width:1px;height:24.3px;background:#8a8a8a"></div>
<div class="a s b" style="top:191.3px;font-size:8.9px;color:#333;left:-123.0px;width:400px;text-align:center;">Диапазон определения</div>
<div class="a s b" style="top:191.3px;font-size:8.9px;color:#333;left:67.5px;width:400px;text-align:center;">Показатель повторяемости</div>
<div class="a s b" style="top:186.0px;font-size:8.9px;color:#333;left:291.0px;width:400px;text-align:center;">Показатель промежуточной</div>
<div class="a s b" style="top:196.6px;font-size:8.9px;color:#333;left:291.0px;width:400px;text-align:center;">(внутрилабораторной) прецизионности</div>
<div class="a s b" style="top:191.3px;font-size:8.9px;color:#333;left:492.5px;width:400px;text-align:center;">Показатель точности</div>
<div class="a s b" style="top:208.4px;font-size:9.4px;color:#333;left:-156.0px;width:400px;text-align:center;">от</div>
<div class="a s b" style="top:208.4px;font-size:9.4px;color:#333;left:-87.6px;width:400px;text-align:center;">до</div>
<div class="a s b" style="top:208.4px;font-size:9.4px;color:#333;left:19.0px;width:400px;text-align:center;">Значение</div>
<div class="a s b" style="top:208.4px;font-size:9.4px;color:#333;left:141.0px;width:400px;text-align:center;">Ед.изм</div>
<div class="a s b" style="top:208.4px;font-size:9.4px;color:#333;left:249.0px;width:400px;text-align:center;">Значение</div>
<div class="a s b" style="top:208.4px;font-size:9.4px;color:#333;left:350.5px;width:400px;text-align:center;">Ед.изм</div>
<div class="a s b" style="top:208.4px;font-size:9.4px;color:#333;left:437.5px;width:400px;text-align:center;">Значение</div>
<div class="a s b" style="top:208.4px;font-size:9.4px;color:#333;left:537.5px;width:400px;text-align:center;">Ед.изм</div>
<div class="a s" style="top:220.5px;font-size:9.4px;color:#333;left:-122.6px;width:200px;text-align:right;">0,005</div>
<div class="a s" style="top:220.5px;font-size:9.4px;color:#333;left:-56.6px;width:200px;text-align:right;">1,5</div>
<div class="a s" style="top:220.5px;font-size:9.4px;color:#333;left:90.5px;width:200px;text-align:right;">13</div>
<div class="a s" style="top:220.5px;font-size:9.4px;color:#333;left:294.5px;">%</div>
<div class="a s" style="top:220.5px;font-size:9.4px;color:#333;left:307.0px;width:200px;text-align:right;">13</div>
<div class="a s" style="top:220.5px;font-size:9.4px;color:#333;left:511.0px;">%</div>
<div class="a s" style="top:220.5px;font-size:9.4px;color:#333;left:594.5px;">32</div>
<div class="a s" style="top:220.5px;font-size:9.4px;color:#333;left:684.5px;">%</div>
<div class="a s b" style="top:232.7px;font-size:9.4px;color:#333;left:11.5px;">Участники</div>
<div class="a" style="left:96.6px;top:245.0px;width:1px;height:11.4px;background:#8a8a8a"></div>
<div class="a" style="left:389.0px;top:245.0px;width:1px;height:11.4px;background:#8a8a8a"></div>
<div class="a" style="left:613.8px;top:245.0px;width:1px;height:11.4px;background:#8a8a8a"></div>
<div class="a s b" style="top:245.0px;font-size:9.4px;color:#333;left:-147.0px;width:400px;text-align:center;">№</div>
<div class="a s b" style="top:245.0px;font-size:9.4px;color:#333;left:43.3px;width:400px;text-align:center;">ФИО</div>
<div class="a s b" style="top:245.0px;font-size:9.4px;color:#333;left:301.8px;width:400px;text-align:center;">Должность</div>
<div class="a s b" style="top:245.0px;font-size:9.4px;color:#333;left:503.0px;width:400px;text-align:center;">Тип участника</div>
<div class="a s b" style="top:272.1px;font-size:10.3px;color:#333;left:11.5px;text-decoration:underline;">Результаты контроля</div>
<div class="a" style="left:8.7px;top:293.0px;width:783.5px;height:1px;background:#8a8a8a"></div>
<div class="a" style="left:8.7px;top:317.1px;width:783.5px;height:1px;background:#8a8a8a"></div>
<div class="a" style="left:8.7px;top:329.3px;width:783.5px;height:1px;background:#8a8a8a"></div>
<div class="a" style="left:8.7px;top:341.8px;width:783.5px;height:1px;background:#8a8a8a"></div>
<div class="a" style="left:8.7px;top:354.3px;width:783.5px;height:1px;background:#8a8a8a"></div>
<div class="a" style="left:8.2px;top:293.5px;width:1px;height:110.5px;background:#8a8a8a"></div>
<div class="a" style="left:791.7px;top:293.5px;width:1px;height:110.5px;background:#8a8a8a"></div>
<div class="a" style="left:193.9px;top:293.5px;width:1px;height:61.3px;background:#8a8a8a"></div>
<div class="a" style="left:420.0px;top:293.5px;width:1px;height:61.3px;background:#8a8a8a"></div>
<div class="a" style="left:613.9px;top:293.5px;width:1px;height:61.3px;background:#8a8a8a"></div>
<div class="a s" style="top:299.5px;font-size:9.4px;color:#333;left:10.7px;">Контрольная карта</div>
<div class="a s" style="top:299.5px;font-size:9.4px;color:#333;left:107.3px;width:400px;text-align:center;">для контроля повторяемости</div>
<div class="a s" style="top:295.2px;font-size:9.4px;color:#333;left:316.5px;width:400px;text-align:center;">для контроля промежуточной</div>
<div class="a s" style="top:305.8px;font-size:9.4px;color:#333;left:317.0px;width:400px;text-align:center;">(внутрилабораторной) прецизионности</div>
<div class="a s" style="top:299.5px;font-size:9.4px;color:#333;left:503.0px;width:400px;text-align:center;">для контроля точности</div>
<div class="a s" style="top:317.9px;font-size:9.4px;color:#333;left:10.7px;">Пределы действия</div>
<div class="a s" style="top:317.9px;font-size:9.4px;color:#333;left:107.3px;width:400px;text-align:center;">0,47918</div>
<div class="a s" style="top:317.9px;font-size:9.4px;color:#333;left:317.3px;width:400px;text-align:center;">0,47918</div>
<div class="a s" style="top:317.9px;font-size:9.4px;color:#333;left:503.0px;width:400px;text-align:center;">0,4</div>
<div class="a s" style="top:330.1px;font-size:9.4px;color:#333;left:10.7px;">Пределы предупреждения</div>
<div class="a s" style="top:330.1px;font-size:9.4px;color:#333;left:107.3px;width:400px;text-align:center;">0,36842</div>
<div class="a s" style="top:330.1px;font-size:9.4px;color:#333;left:317.3px;width:400px;text-align:center;">0,36842</div>
<div class="a s" style="top:330.1px;font-size:9.4px;color:#333;left:503.0px;width:400px;text-align:center;">0,27</div>
<div class="a s" style="top:342.6px;font-size:9.4px;color:#333;left:10.7px;">Средняя линия</div>
<div class="a s" style="top:342.6px;font-size:9.4px;color:#333;left:107.3px;width:400px;text-align:center;">0,14664</div>
<div class="a s" style="top:342.6px;font-size:9.4px;color:#333;left:317.3px;width:400px;text-align:center;">0,14664</div>
<div class="a s" style="top:342.6px;font-size:9.4px;color:#333;left:503.0px;width:400px;text-align:center;">-</div>
<div class="a" style="left:43.8px;top:354.8px;width:1px;height:49.2px;background:#8a8a8a"></div>
<div class="a" style="left:114.1px;top:354.8px;width:1px;height:49.2px;background:#8a8a8a"></div>
<div class="a" style="left:158.8px;top:354.8px;width:1px;height:49.2px;background:#8a8a8a"></div>
<div class="a" style="left:292.1px;top:354.8px;width:1px;height:49.2px;background:#8a8a8a"></div>
<div class="a" style="left:636.3px;top:354.8px;width:1px;height:49.2px;background:#8a8a8a"></div>
<div class="a" style="left:159.3px;top:384.5px;width:477.5px;height:1px;background:#8a8a8a"></div>
<div class="a" style="left:194.0px;top:385.0px;width:1px;height:19.0px;background:#8a8a8a"></div>
<div class="a" style="left:253.1px;top:385.0px;width:1px;height:19.0px;background:#8a8a8a"></div>
<div class="a" style="left:409.0px;top:385.0px;width:1px;height:19.0px;background:#8a8a8a"></div>
<div class="a" style="left:520.2px;top:385.0px;width:1px;height:19.0px;background:#8a8a8a"></div>
<div class="a s" style="top:381.3px;font-size:8.5px;color:#333;left:-174.0px;width:400px;text-align:center;">Номер</div>
<div class="a s" style="top:391.1px;font-size:8.5px;color:#333;left:-174.0px;width:400px;text-align:center;">контрол</div>
<div class="a s" style="top:391.1px;font-size:8.5px;color:#333;left:-120.6px;width:400px;text-align:center;">Результаты</div>
<div class="a s" style="top:381.3px;font-size:8.5px;color:#333;left:-63.6px;width:400px;text-align:center;">Результат</div>
<div class="a s" style="top:391.1px;font-size:8.5px;color:#333;left:-63.6px;width:400px;text-align:center;">контрольн</div>
<div class="a s" style="top:364.1px;font-size:8.5px;color:#333;left:26.5px;width:400px;text-align:center;">Результат контрольной процедуры</div>
<div class="a s" style="top:386.6px;font-size:8.5px;color:#333;left:23.2px;width:400px;text-align:center;">для контроля</div>
<div class="a s" style="top:358.9px;font-size:8.5px;color:#333;left:264.0px;width:400px;text-align:center;">Вывод о несоответствии результата контрольной процедуры пределам действия или</div>
<div class="a s" style="top:370.4px;font-size:8.5px;color:#333;left:264.7px;width:400px;text-align:center;">предупреждения</div>
<div class="a s" style="top:355.4px;font-size:8.5px;color:#333;left:514.3px;width:400px;text-align:center;">Результат интерпретации</div>
<div class="a s" style="top:365.1px;font-size:8.5px;color:#333;left:514.3px;width:400px;text-align:center;">данных</div>
<div class="a s" style="top:375.3px;font-size:8.5px;color:#333;left:514.3px;width:400px;text-align:center;">контрольных</div>
<div class="a s" style="top:385.9px;font-size:8.5px;color:#333;left:514.3px;width:400px;text-align:center;">карт, требующий</div>
<div class="a s" style="top:396.1px;font-size:8.5px;color:#333;left:514.3px;width:400px;text-align:center;">принятия</div>
<div class="a" style="left:974px;top:12px;width:4.4px;height:400px;background:#dcdcdc;border-radius:2px"></div>
<div class="a" style="left:974px;top:31px;width:4.4px;height:59px;background:#a9a9a9;border-radius:2px"></div>
<div class="a" style="left:974.5px;top:3.5px;width:0;height:0;border:2px solid transparent;border-bottom:2.6px solid #555;border-top:none"></div>
</div><!--enddoc-->
</div>
<svg class="a" style="left:379px;top:373px" width="9" height="12" viewBox="0 0 9 12"><path d="M1.4,1 V9.4 L3.4,7.6 L4.9,10.8 L6.1,10.2 L4.7,7.2 L7.4,7 Z" fill="#fff" stroke="#5a5a5a" stroke-width="0.7" stroke-linejoin="round"/></svg>
</body>
</html>
